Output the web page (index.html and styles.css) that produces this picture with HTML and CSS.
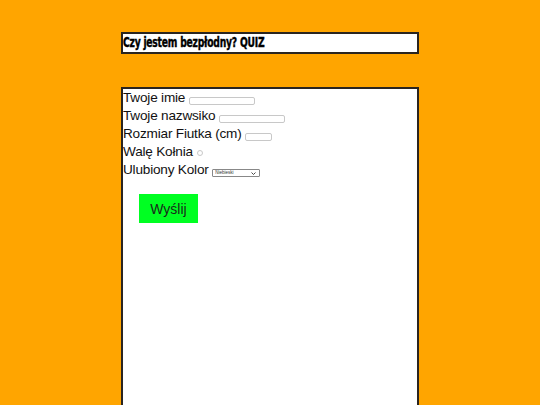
FILE: index.html
```html
<!DOCTYPE html>
<html lang="pl">
<head>
<meta charset="utf-8">
<title>Czy jestem bezpłodny? QUIZ</title>
<link rel="stylesheet" href="styles.css">
</head>
<body>
<div class="page">
  <div class="header"><span class="title">Czy jestem bezpłodny? QUIZ</span></div>
  <form class="quiz">
    <div class="row">Twoje imie <input class="txt" type="text"></div>
    <div class="row">Twoje nazwsiko <input class="txt" type="text"></div>
    <div class="row">Rozmiar Fiutka (cm) <input class="txt num" type="text"></div>
    <div class="row">Walę Kołnia <input class="radio" type="radio"></div>
    <div class="row">Ulubiony Kolor <span class="selwrap"><select class="sel"><option>Niebieski</option><option>Czerwony</option><option>Zielony</option></select><svg class="chev" width="5" height="3" viewBox="0 0 5 3"><path d="M0.5 0.5 L2.5 2.5 L4.5 0.5" fill="none" stroke="#333" stroke-width="0.9"/></svg></span></div>
    <button class="send" type="button">Wyślij</button>
  </form>
</div>
</body>
</html>
```
FILE: styles.css
```css
html, body {
  margin: 0;
  padding: 0;
  background: #ffa500;
}
.page {
  width: 298px;
  margin: 0 auto;
  padding-top: 32px;
}
.header {
  box-sizing: border-box;
  height: 22px;
  border: 2px solid #2a2520;
  background: #fff;
  font-family: "DejaVu Sans Condensed", "DejaVu Sans", sans-serif;
  font-weight: bold;
  font-size: 14px;
  line-height: 16px;
  color: #000;
  white-space: nowrap;
  overflow: hidden;
}
.title {
  display: inline-block;
  letter-spacing: -0.3px;
  transform: scaleX(0.73);
  transform-origin: 0 50%;
  -webkit-text-stroke: 0.4px #000;
}
.quiz {
  box-sizing: border-box;
  margin-top: 33px;
  height: 400px;
  border: 2px solid #2a2520;
  background: #fff;
  padding: 0;
  font-family: "Liberation Sans", Arial, sans-serif;
  font-size: 13.6px;
  color: #111;
  display: flex;
  flex-direction: column;
  align-items: flex-start;
}
.row {
  height: 18px;
  line-height: 18px;
  white-space: nowrap;
  letter-spacing: -0.2px;
}
.txt {
  box-sizing: border-box;
  width: 66px;
  height: 8px;
  padding: 0;
  margin: 0;
  border: 1px solid #c8c8c8;
  border-radius: 2px;
  font-size: 5px;
  vertical-align: -1px;
}
.num {
  width: 27px;
}
.radio {
  appearance: none;
  -webkit-appearance: none;
  box-sizing: border-box;
  width: 6px;
  height: 6px;
  margin: 0 0 0 1px;
  border: 1px solid #c8c8c8;
  border-radius: 50%;
  vertical-align: 0;
}
.selwrap {
  position: relative;
  display: inline-block;
  margin-left: 0;
  vertical-align: 0;
  line-height: 0;
}
.sel {
  appearance: none;
  -webkit-appearance: none;
  box-sizing: border-box;
  width: 48px;
  height: 8px;
  padding: 0 0 0 2px;
  margin: 0;
  font-family: "Liberation Sans", Arial, sans-serif;
  font-size: 4.5px;
  line-height: 6px;
  color: #333;
  background: #fff;
  border: 1px solid #888;
  border-radius: 1px;
}
.chev {
  position: absolute;
  right: 4px;
  top: 2.5px;
}
.send {
  margin: 15px 0 0 16px;
  width: 59px;
  height: 29px;
  border: none;
  background: #00ff22;
  font-family: "Liberation Sans", Arial, sans-serif;
  font-size: 14px;
  color: #1a2a1a;
  padding: 0;
}
```
